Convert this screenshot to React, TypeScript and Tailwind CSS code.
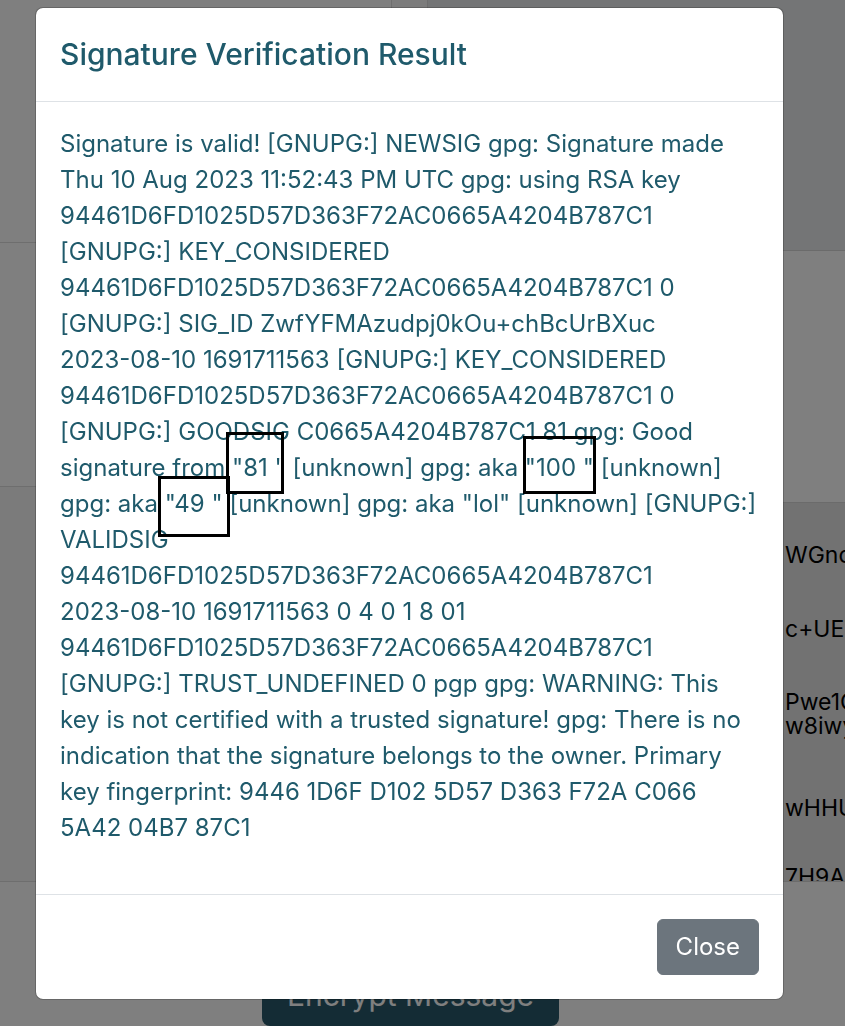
import React from 'react';

const nw = (s: string) => <span className="whitespace-nowrap">{s}</span>;

// page that sits behind the dimmed backdrop
const BackgroundPage = () => (
  <div className="w-[845px] h-[1026px] bg-white overflow-hidden">
    <div className="flex">
      {/* left column */}
      <div className="w-[392px] shrink-0 border-r border-[#dcdcdc]">
        <div className="h-[243px] border-b border-[#dcdcdc]" />
        <div className="h-[244px] border-b border-[#dcdcdc]" />
        <div className="h-[395px] border-b border-[#dcdcdc] bg-[#f6f6f6]" />
      </div>
      {/* right column */}
      <div className="flex-1 min-w-0">
        <div className="h-[251px] flex border-b border-[#d6d6d6]">
          <div className="w-[36px] shrink-0 border-r border-[#dcdcdc] bg-[#f8f8f8]" />
          <div className="flex-1 bg-[#e8eaec]" />
        </div>
        <div className="h-[252px] border-b border-[#d6d6d6]" />
        <div className="h-[379px] bg-[#e5e5e5] border-b border-[#d6d6d6] pl-[393px] text-[23px] leading-[24px] text-black whitespace-nowrap overflow-hidden">
          <div className="mt-[40px]">WGnoc</div>
          <div className="mt-[50px]">c+UET</div>
          <div className="mt-[49px]">Pwe1C</div>
          <div>w8iwy</div>
          <div className="mt-[58px]">wHHU</div>
          <div className="mt-[45px]">7H9A</div>
        </div>
      </div>
    </div>
    <div className="flex justify-center pt-[82px] pr-[24px]">
      <button className="w-[297px] h-[62px] rounded-lg bg-[#28596a] text-white text-[30px]">
        Encrypt Message
      </button>
    </div>
  </div>
);

export default function App() {
  return (
    <div className="relative w-[845px] h-[1026px] overflow-hidden font-['Inter',sans-serif]">
      <BackgroundPage />

      {/* backdrop */}
      <div className="fixed inset-0 bg-black/50" />

      {/* modal */}
      <div className="fixed inset-0 pl-[35px] pt-[7px]">
        <div className="relative w-[749px] bg-white rounded-lg border border-black/20 bg-clip-padding">
          <div className="px-6 py-6 border-b border-[#dee2e6]">
            <h5 className="text-[30px] leading-[45px] font-medium text-[#1f5a6b]">
              Signature Verification Result
            </h5>
          </div>

          <div className="p-6">
            <p className="mb-6 text-[24px] leading-[36px] text-[#1f5a6b]">
              Signature is valid! [GNUPG:] NEWSIG gpg: Signature made Thu 10 Aug 2023 11:52:43 PM UTC gpg:
              using RSA key 94461D6FD1025D57D363F72AC0665A4204B787C1 [GNUPG:] KEY_CONSIDERED
              94461D6FD1025D57D363F72AC0665A4204B787C1 0 [GNUPG:] SIG_ID ZwfYFMAzudpj0kOu+chBcUrBXuc{' '}
              {nw('2023-08-10')} 1691711563 [GNUPG:] KEY_CONSIDERED 94461D6FD1025D57D363F72AC0665A4204B787C1 0
              [GNUPG:] GOODSIG C0665A4204B787C1 81 gpg: Good signature from "81 " [unknown] gpg: aka "100 "
              [unknown] gpg: aka "49 " [unknown] gpg: aka "lol" [unknown] [GNUPG:] VALIDSIG
              94461D6FD1025D57D363F72AC0665A4204B787C1 {nw('2023-08-10')} 1691711563 0 4 0 1 8 01
              94461D6FD1025D57D363F72AC0665A4204B787C1 [GNUPG:] TRUST_UNDEFINED 0 pgp gpg: WARNING: This key is
              not certified with a trusted signature! gpg: There is no indication that the signature belongs to
              the owner. Primary key fingerprint: 9446 1D6F D102 5D57 D363 F72A C066 5A42 04B7 87C1
            </p>
          </div>

          <div className="flex justify-end px-[18px] py-[18px] border-t border-[#dee2e6]">
            <button className="m-[6px] px-[18px] py-[9px] rounded-md border border-[#6c757d] bg-[#6c757d] text-white text-[24px] leading-[36px]">
              Close
            </button>
          </div>

          {/* missing-glyph boxes drawn over the text */}
          <div className="absolute left-[190px] top-[424px] w-[58px] h-[62px] border-[3px] border-black" />
          <div className="absolute left-[487px] top-[428px] w-[73px] h-[58px] border-[3px] border-black" />
          <div className="absolute left-[122px] top-[468px] w-[72px] h-[61px] border-[3px] border-black" />
        </div>
      </div>
    </div>
  );
}
